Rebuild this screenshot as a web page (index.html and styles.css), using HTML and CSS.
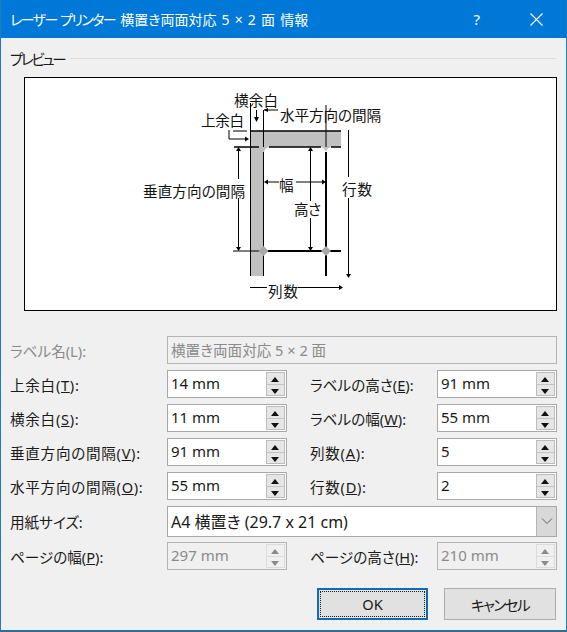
FILE: index.html
```html
<!DOCTYPE html>
<html lang="ja">
<head>
    <meta charset="UTF-8">
    <title>レーザー プリンター 横置き両面対応 5 × 2 面 情報</title>
    <link rel="stylesheet" href="styles.css">
</head>
<body>
    <div class="window">
        <header class="titlebar">
            <span class="title"><span class="kana">レーザー プリンター</span> 横置き両面対応 5 × 2 面 情報</span>
            <span class="help">?</span>
            <svg class="close" width="13" height="13" viewBox="0 0 13 13"><path d="M.5 .5L12.5 12.5M12.5 .5L.5 12.5" stroke="#fff" stroke-width="1.1" fill="none"/></svg>
        </header>
        <div class="content">
            <div class="group-title"><span class="kana tight">プレビュー</span><div class="group-line"></div></div>
            <div class="preview">
                <svg class="diagram" width="531" height="232" viewBox="25 78 531 232">
                    <!-- sheet edges -->
                    <path class="band" d="M251 131H341V147H264V276H251Z"/>
                    <path class="band" d="M259 147H269Q265 148 264 152Q263 148 259 147Z"/>
                    <path class="band" d="M321 147H331Q327 148 326 152Q325 148 321 147Z"/>
                    <path class="thin" d="M250.5 131V276M263.5 152V276"/>
                    <path class="mid" d="M250 131H341M234 147H259M269 147H321M331 147H341"/>
                    <path class="thick" d="M326 152V276"/>
                    <path class="thick" d="M263 251H341"/>
                    <path class="thin" d="M233 251H263"/>
                    <path class="diamond" d="M263.5 246L268.5 251L263.5 256L258.5 251Z"/>
                    <path class="diamond" d="M326 246L331 251L326 256L321 251Z"/>
                    <!-- dimension lines -->
                    <path class="thin" d="M250.5 103V131M263.5 110V147M264 110H278M326 105V147"/>
                    <path class="thin" d="M256.5 110V118M233 131H247"/>
                    <path class="thin" d="M229 130V139H245"/>
                    <path class="thin" d="M238.5 150V179M238.5 198V248"/>
                    <path class="thin" d="M266 182H279M296 182H324"/>
                    <path class="thin" d="M310.5 150V201M310.5 218V248"/>
                    <path class="thin" d="M348.5 130V177M348.5 198V274"/>
                    <path class="thin" d="M250 287.5H267M298 287.5H340"/>
                    <!-- arrow heads -->
                    <path class="head" d="M256.5 122L254 117H259Z"/>
                    <path class="head" d="M264 110L268 108V112Z"/>
                    <path class="head" d="M249 139L245 136.5V141.5Z"/>
                    <path class="head" d="M238.5 147L236 151H241Z"/>
                    <path class="head" d="M238.5 251L236 247H241Z"/>
                    <path class="head" d="M264 182L268 179.5V184.5Z"/>
                    <path class="head" d="M326 182L322 179.5V184.5Z"/>
                    <path class="head" d="M310.5 147L308 151H313Z"/>
                    <path class="head" d="M310.5 251L308 247H313Z"/>
                    <path class="head" d="M348.5 278L346 274H351Z"/>
                    <path class="head" d="M343 287.5L339 285V290Z"/>
                    <!-- captions -->
                    <text x="234" y="106" textLength="44">横余白</text>
                    <text x="201" y="126" textLength="43">上余白</text>
                    <text x="280" y="121" textLength="101">水平方向の間隔</text>
                    <text x="143" y="197" textLength="102">垂直方向の間隔</text>
                    <text x="279" y="191" textLength="15">幅</text>
                    <text x="294" y="215" textLength="27">高さ</text>
                    <text x="342" y="195" textLength="30">行数</text>
                    <text x="268" y="297" textLength="30">列数</text>
                </svg>
            </div>
            <div class="form">
                <label class="field-label off">ラベル名(L):</label>
                <div class="textbox off wide">横置き両面対応 5 × 2 面</div>

                <label class="field-label kanji">上余白(<u>T</u>):</label>
                <div class="spin"><span class="spin-value">14 mm</span><div class="spin-btns"><b class="up"></b><b class="down"></b></div></div>
                <label class="field-label right">ラベルの高さ(<u>E</u>):</label>
                <div class="spin"><span class="spin-value">91 mm</span><div class="spin-btns"><b class="up"></b><b class="down"></b></div></div>

                <label class="field-label kanji">横余白(<u>S</u>):</label>
                <div class="spin"><span class="spin-value">11 mm</span><div class="spin-btns"><b class="up"></b><b class="down"></b></div></div>
                <label class="field-label right">ラベルの幅(<u>W</u>):</label>
                <div class="spin"><span class="spin-value">55 mm</span><div class="spin-btns"><b class="up"></b><b class="down"></b></div></div>

                <label class="field-label kanji">垂直方向の間隔(<u>V</u>):</label>
                <div class="spin"><span class="spin-value">91 mm</span><div class="spin-btns"><b class="up"></b><b class="down"></b></div></div>
                <label class="field-label right kanji">列数(<u>A</u>):</label>
                <div class="spin"><span class="spin-value">5</span><div class="spin-btns"><b class="up"></b><b class="down"></b></div></div>

                <label class="field-label kanji">水平方向の間隔(<u>O</u>):</label>
                <div class="spin"><span class="spin-value">55 mm</span><div class="spin-btns"><b class="up"></b><b class="down"></b></div></div>
                <label class="field-label right kanji">行数(<u>D</u>):</label>
                <div class="spin"><span class="spin-value">2</span><div class="spin-btns"><b class="up"></b><b class="down"></b></div></div>

                <label class="field-label">用紙サイズ:</label>
                <div class="combo wide">
                    <span class="combo-value">A4 横置き (29.7 x 21 cm)</span>
                    <div class="combo-btn"><svg width="12" height="8" viewBox="0 0 12 8"><path d="M1 1.5L6 6.5L11 1.5" stroke="#606060" fill="none"/></svg></div>
                </div>

                <label class="field-label">ページの幅(<u>P</u>):</label>
                <div class="spin disabled"><span class="spin-value">297 mm</span><div class="spin-btns"><b class="up"></b><b class="down"></b></div></div>
                <label class="field-label right">ページの高さ(<u>H</u>):</label>
                <div class="spin disabled"><span class="spin-value">210 mm</span><div class="spin-btns"><b class="up"></b><b class="down"></b></div></div>
            </div>
            <div class="buttons">
                <button class="btn btn-ok"><span>OK</span></button>
                <button class="btn"><span class="kana">キャンセル</span></button>
            </div>
        </div>
    </div>
</body>
</html>
```

FILE: styles.css
```css
* {
    margin: 0;
    padding: 0;
    box-sizing: border-box;
}
body {
    background-color: #f0f0f0;
    font-family: "Noto Sans", "Noto Sans CJK JP", sans-serif;
    font-size: 14.6px;
    font-feature-settings: "palt";
    color: #1a1a1a;
}
.window {
    width: 567px;
    height: 632px;
    border-left: 1px solid #1f7dbb;
    border-right: 1px solid #1f7dbb;
    border-bottom: 2px solid #2a6f9a;
    overflow: hidden;
}
.kana {
    letter-spacing: -1.6px;
}
.kana.tight {
    letter-spacing: -2.4px;
}
.titlebar {
    display: flex;
    align-items: center;
    height: 38px;
    margin: 0 -1px;
    padding-left: 10px;
    background-color: #0078d7;
    color: #fff;
}
.title {
    flex: 1;
    font-size: 14px;
    word-spacing: 1.5px;
}
.help {
    margin-right: 50px;
    font-size: 15px;
}
.close {
    margin-right: 24px;
}
.content {
    padding: 10px 10px 0 9px;
}
.group-title {
    display: flex;
    align-items: center;
    height: 20px;
    gap: 6px;
}
.group-line {
    flex: 1;
    height: 1px;
    background-color: #dcdcdc;
}
.preview {
    width: 533px;
    height: 234px;
    margin: 9px 0 25px 14px;
    background-color: #fff;
    border: 1px solid #000;
}
.diagram {
    display: block;
}
.diagram text {
    font-size: 14.6px;
    fill: #111;
}
.band {
    fill: #c0c0c0;
}
.thin, .mid, .thick {
    fill: none;
    stroke: #000;
}
.mid {
    stroke-width: 1.5;
}
.thick {
    stroke-width: 2;
}
.diamond {
    fill: #a8a8a8;
}
.head {
    fill: #000;
}
.form {
    display: grid;
    grid-template-columns: 157px 120px 150px 120px;
    grid-template-rows: repeat(5, 28px) 30px 28px;
    gap: 6px 0;
    align-items: center;
}
.field-label {
    white-space: nowrap;
}
.field-label.right {
    padding-left: 23px;
}
.field-label.kanji {
    letter-spacing: .7px;
}
.off {
    color: #8a8a8a;
}
.wide {
    grid-column: 2 / 5;
}
.textbox {
    height: 28px;
    padding: 0 3px;
    line-height: 26px;
    background-color: #f0f0f0;
    border: 1px solid #b4b4b4;
}
.spin {
    display: flex;
    justify-content: space-between;
    height: 28px;
    background-color: #fff;
    border: 1px solid #a8a8a8;
}
.spin-value {
    padding-left: 3px;
    font-size: 15px;
    line-height: 25px;
}
.spin-btns {
    display: flex;
    flex-direction: column;
    width: 19px;
    margin: 1px;
    border: 1px solid #bcbcbc;
}
.spin-btns b {
    flex: 1;
    position: relative;
    background-color: #e6e6e6;
}
.spin-btns .down {
    border-top: 1px solid #c4c4c4;
}
.spin-btns b::after {
    content: "";
    position: absolute;
    left: 4px;
    top: 4px;
    border-left: 4px solid transparent;
    border-right: 4px solid transparent;
}
.up::after {
    border-bottom: 5px solid #111;
}
.down::after {
    border-top: 5px solid #111;
}
.disabled {
    background-color: #f0f0f0;
    border-color: #b4b4b4;
    color: #8a8a8a;
}
.disabled .spin-btns {
    border-color: #dcdcdc;
}
.disabled .spin-btns b {
    background-color: #f0f0f0;
    border-color: #dcdcdc;
}
.disabled .up::after {
    border-bottom-color: #8a8a8a;
}
.disabled .down::after {
    border-top-color: #8a8a8a;
}
.combo {
    display: flex;
    justify-content: space-between;
    height: 31px;
    background-color: #fff;
    border: 1px solid #a8a8a8;
}
.combo-value {
    padding-left: 3px;
    font-size: 16px;
    line-height: 31px;
}
.combo-btn {
    display: flex;
    align-items: center;
    justify-content: center;
    width: 20px;
    background-color: #d8d8d8;
    border-left: 1px solid #b4b4b4;
}
.buttons {
    display: flex;
    justify-content: flex-end;
    gap: 16px;
    margin-top: 18px;
}
.btn {
    width: 112px;
    height: 32px;
    font: inherit;
    font-feature-settings: "palt";
    color: #1a1a1a;
    background-color: #e1e1e1;
    border: 1px solid #adadad;
}
.btn-ok {
    width: 111px;
    padding: 1px;
    border: 2px solid #0f6cb0;
}
.btn-ok span {
    display: block;
    height: 100%;
    line-height: 25px;
    border: 1px dotted #222;
}
```
